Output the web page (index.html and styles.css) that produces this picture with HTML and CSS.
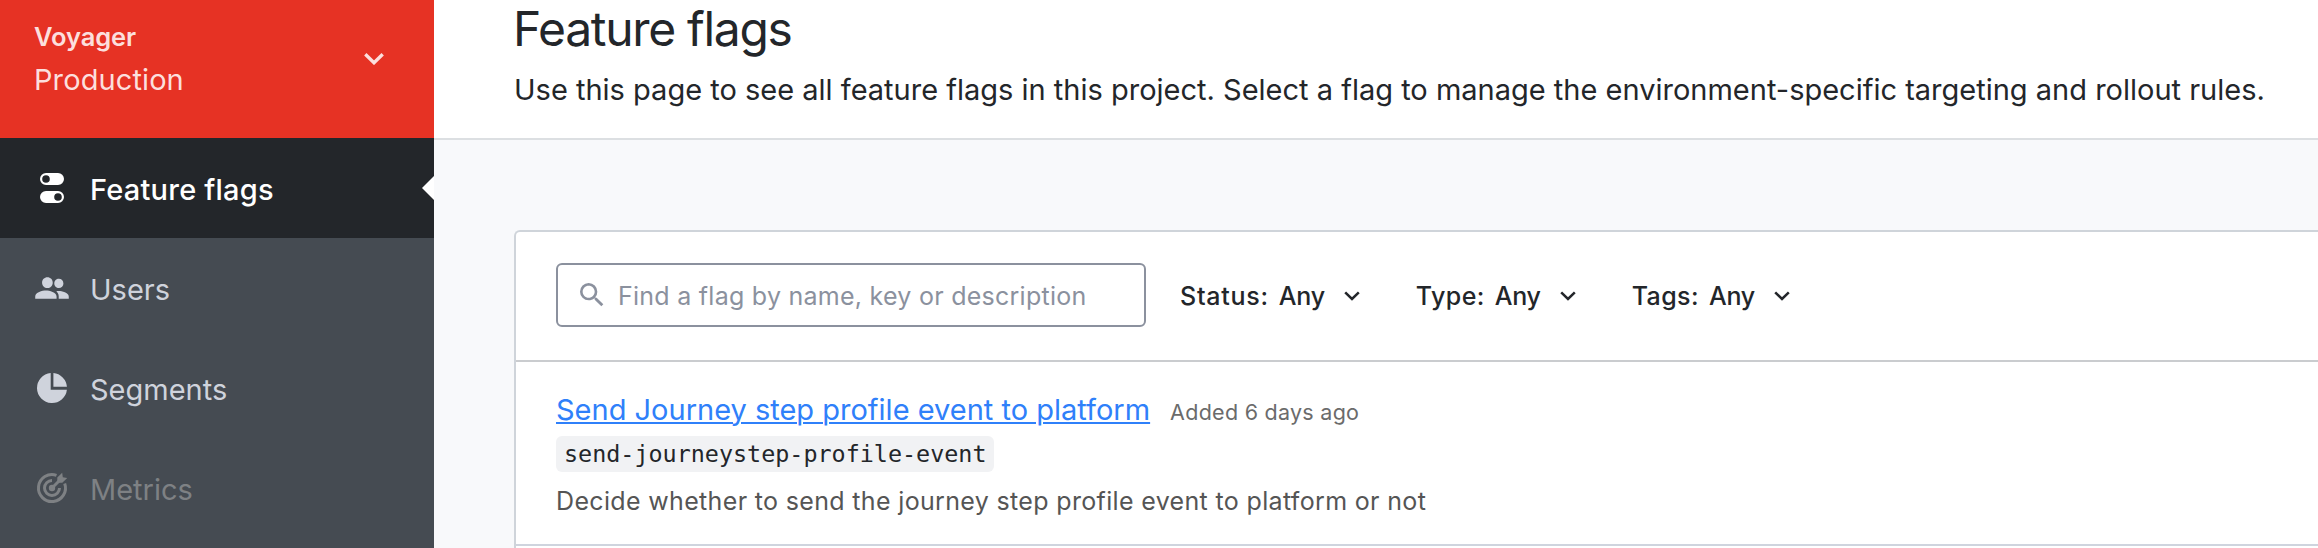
FILE: index.html
```
<!DOCTYPE html>
<html lang="en">
<head>
<meta charset="utf-8">
<title>Feature flags</title>
<link rel="stylesheet" href="styles.css">
</head>
<body>
<div class="app">
  <aside class="sidebar">
    <div class="env">
      <div class="env-names">
        <div class="env-project">Voyager</div>
        <div class="env-name">Production</div>
      </div>
      <svg class="env-chevron" viewBox="0 0 20 12"><path d="M1.3 1.3 10 9.8l8.700-8.500"/></svg>
    </div>
    <nav class="nav">
      <a class="nav-item active">
        <svg class="nav-icon" viewBox="0 0 36 36"><path fill-rule="evenodd" d="M12 3h12a6 6 0 0 1 0 12H12a6 6 0 0 1 0-12zm0 2.200a3.800 3.800 0 1 0 0 7.600 3.800 3.800 0 0 0 0-7.600zM12 21h12a6 6 0 0 1 0 12H12a6 6 0 0 1 0-12zm12 2.200a3.800 3.800 0 1 0 0 7.600 3.800 3.800 0 0 0 0-7.600z"/></svg>
        <span class="nav-label">Feature flags</span>
        <span class="nav-arrow"></span>
      </a>
      <a class="nav-item">
        <svg class="nav-icon" viewBox="0.200 0.200 23.600 23.600"><path d="M16.500 12A2.990 2.990 0 0 0 19.490 9c0-1.660-1.330-3-2.990-3s-3 1.340-3 3 1.340 3 3 3zM9 12c1.990 0 3.490-1.570 3.490-3.500S10.990 5 9 5 5.500 6.570 5.500 8.500 7.010 12 9 12zm7.500 2c-.5 0-1.100.05-1.700.15.9.8 1.600 1.900 1.600 3.400V19H23v-1.500c0-2.330-4.670-3.500-6.500-3.500zM8 13.700c-2.330 0-7 1.170-7 3.800V19h14v-1.500c0-2.630-4.670-3.800-7-3.800z"/></svg>
        <span class="nav-label">Users</span>
      </a>
      <a class="nav-item">
        <svg class="nav-icon" viewBox="0 0 36 36"><path d="M16.700 3.060A15 15 0 1 0 32.900 19.700H16.700zM19.400 3.060V16.700H32.940A15 15 0 0 0 19.400 3.060z"/></svg>
        <span class="nav-label">Segments</span>
      </a>
      <a class="nav-item disabled">
        <svg class="nav-icon" viewBox="0 0 36 36"><g class="ring"><path d="M22.500 5.300A13.500 13.500 0 1 0 30.700 13.500"/><path d="M18 10.500A7.500 7.500 0 1 0 25.500 18"/><path d="M18 18 26 10"/></g><circle cx="18" cy="18" r="3.200"/><path d="M23.300 11.300V7.600L28.200 2.800l.6 4.500L33.200 8l-4.900 4.700h-3.600z"/></svg>
        <span class="nav-label">Metrics</span>
      </a>
    </nav>
  </aside>
  <main class="main">
    <header class="page-header">
      <h1 class="title">Feature flags</h1>
      <p class="lead">Use this page to see all feature flags in this project. Select a flag to manage the environment-specific targeting and rollout rules.</p>
    </header>
    <section class="card">
      <div class="filters">
        <div class="search">
          <svg class="search-icon" viewBox="0 0 24 24"><path d="M15.500 14h-.79l-.28-.27A6.470 6.470 0 0 0 16 9.500 6.500 6.500 0 1 0 9.500 16c1.610 0 3.090-.59 4.230-1.570l.27.28v.79l5 4.990L20.490 19l-4.990-5zm-6 0C7.010 14 5 11.990 5 9.500S7.010 5 9.500 5 14 7.010 14 9.500 11.990 14 9.500 14z"/></svg>
          <span class="placeholder">Find a flag by name, key or description</span>
        </div>
        <div class="filter"><span class="filter-label wide">Status:</span><span class="filter-value">Any</span><svg class="chevron" viewBox="0 0 16 10"><path d="M1.200 1.300 8 8l6.800-6.700"/></svg></div>
        <div class="filter"><span class="filter-label">Type:</span><span class="filter-value">Any</span><svg class="chevron" viewBox="0 0 16 10"><path d="M1.200 1.300 8 8l6.800-6.700"/></svg></div>
        <div class="filter"><span class="filter-label">Tags:</span><span class="filter-value">Any</span><svg class="chevron" viewBox="0 0 16 10"><path d="M1.200 1.300 8 8l6.800-6.700"/></svg></div>
      </div>
      <article class="flag">
        <div class="flag-head">
          <a class="flag-link">Send Journey step profile event to platform</a>
          <span class="flag-added">Added 6 days ago</span>
        </div>
        <code class="flag-key">send-journeystep-profile-event</code>
        <p class="flag-desc">Decide whether to send the journey step profile event to platform or not</p>
      </article>
    </section>
  </main>
</div>
</body>
</html>
```
FILE: styles.css
```
* { box-sizing: border-box; }
body {
  margin: 0;
  font-family: Inter, "Liberation Sans", sans-serif;
  color: #23262a;
  background: #f8f9fb;
  overflow: hidden;
}
.app { display: flex; height: 548px; overflow: hidden; }

.sidebar { flex: 0 0 434px; background: #454b52; }
.env {
  display: flex;
  justify-content: space-between;
  height: 138px;
  padding: 17px 50px 0 34px;
  background: #e63224;
  color: #fcdfdd;
}
.env-project { font-size: 25.5px; font-weight: 600; line-height: 40px; letter-spacing: -0.1px; }
.env-name { margin-top: 1px; font-size: 29px; line-height: 44px; letter-spacing: 0.1px; }
.env-chevron { width: 20px; height: 12px; margin-top: 36px; fill: none; stroke: #fcdfdd; stroke-width: 3.3; }

.nav-item {
  position: relative;
  display: flex;
  align-items: center;
  gap: 20px;
  height: 100px;
  padding-left: 34px;
  color: #cfd3dc;
}
.nav-icon { width: 36px; height: 36px; fill: currentColor; }
.nav-label { padding-top: 3px; font-size: 29px; line-height: 44px; }
.active { background: #23262a; color: #fff; }
.active .nav-label { font-weight: 500; letter-spacing: 0.22px; }
.disabled { color: #7e8184; }
.ring { fill: none; stroke: currentColor; stroke-width: 3; }
.nav-arrow {
  position: absolute;
  right: 0;
  top: 38px;
  border: 12px solid transparent;
  border-left: 0;
  border-right-color: #fff;
}

.main { flex: 1; min-width: 0; }
.page-header {
  height: 140px;
  padding-left: 80px;
  background: #fff;
  border-bottom: 2px solid #dcdfe2;
}
.title { margin: 0 0 0 -1px; font-size: 48px; font-weight: 400; line-height: 57px; letter-spacing: -1.33px; }
.lead { margin: 11px 0 0; font-size: 29px; line-height: 44px; white-space: nowrap; }

.card {
  height: 340px;
  margin: 90px 0 0 80px;
  background: #fff;
  border: 2px solid #cfd4da;
  border-right: 0;
  border-radius: 6px 0 0 0;
}
.filters {
  display: flex;
  align-items: center;
  height: 130px;
  padding: 0 0 2px 40px;
  border-bottom: 2px solid #cacccf;
}
.search {
  display: flex;
  align-items: center;
  width: 590px;
  height: 64px;
  margin-right: 34px;
  padding-left: 18px;
  border: 2px solid #8b919e;
  border-radius: 6px;
  color: #8b919e;
}
.search-icon { width: 32px; height: 32px; margin-right: 10px; fill: currentColor; }
.placeholder { font-size: 25px; letter-spacing: 0.26px; padding-top: 1px; }
.filter { display: flex; align-items: center; margin-right: 56px; font-size: 25px; font-weight: 500; padding-top: 1px; }
.filter-label { margin-right: 10px; letter-spacing: 0.4px; }
.wide { letter-spacing: 0.75px; }
.filter-value { margin-right: 19px; letter-spacing: -0.25px; }
.chevron { width: 16px; height: 10px; fill: none; stroke: #23262a; stroke-width: 2.5; }

.flag {
  height: 184px;
  padding: 28px 0 0 40px;
  border-bottom: 2px solid #cfd4de;
}
.flag-head { display: flex; align-items: baseline; gap: 20px; }
.flag-link {
  font-size: 29px;
  line-height: 40px;
  color: #2f80fa;
  text-decoration: underline;
  text-decoration-thickness: 2px;
  text-underline-offset: 2px;
}
.flag-added { font-size: 21.5px; letter-spacing: 0.27px; color: #6b6b6b; }
.flag-key {
  display: block;
  width: fit-content;
  height: 36px;
  margin-top: 6px;
  padding: 0 8px;
  border-radius: 6px;
  background: #f1f2f4;
  font-family: "DejaVu Sans Mono", monospace;
  font-size: 23.4px;
  line-height: 36px;
}
.flag-desc { margin: 9px 0 0; font-size: 25px; line-height: 40px; letter-spacing: 0.34px; color: #555; }
```
